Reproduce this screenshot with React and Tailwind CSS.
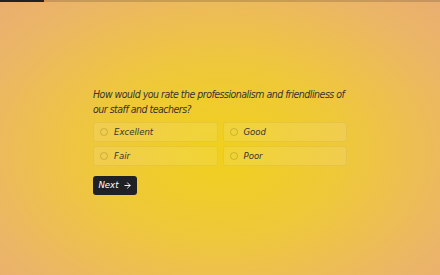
import { ArrowRight } from 'lucide-react';

const options = ['Excellent', 'Good', 'Fair', 'Poor'];

export default function App() {
  return (
    <div
      className="relative w-[440px] h-[275px] overflow-hidden bg-[radial-gradient(ellipse_at_50%_55%,#f0d01c_0%,#efc83a_40%,#ebb666_80%,#e9ae70_100%)]"
      style={{ fontFamily: '"DejaVu Sans Condensed", "Liberation Sans", sans-serif' }}
    >
      {/* progress */}
      <div className="absolute top-0 left-0 right-0 h-[2px] bg-black/15">
        <div className="h-full w-[44px] bg-[#1f2124]" />
      </div>

      <div className="pt-[87px] pl-[93px]">
        <h1 className="w-[262px] italic text-[10.5px] leading-[15px] text-[#37352d] tracking-[-0.5px]">
          How would you rate the professionalism and friendliness of our staff and teachers?
        </h1>

        <div className="grid grid-cols-2 gap-x-[5px] gap-y-[4px] mt-[5px] w-[254px]">
          {options.map((o) => (
            <label
              key={o}
              className="flex items-center h-[20px] rounded-[3px] border border-black/5 bg-white/10 pl-[6px]"
            >
              <span className="w-[8px] h-[8px] rounded-full border border-black/15 shrink-0" />
              <span className="ml-[6px] italic text-[9.5px] text-[#37352d]">{o}</span>
            </label>
          ))}
        </div>

        <button className="mt-[10px] flex items-center gap-[4px] h-[19px] w-[44px] justify-center rounded-[3px] bg-[#1f2124] text-white italic text-[9.5px]">
          Next
          <ArrowRight className="w-[9px] h-[9px]" strokeWidth={2.5} />
        </button>
      </div>
    </div>
  );
}
